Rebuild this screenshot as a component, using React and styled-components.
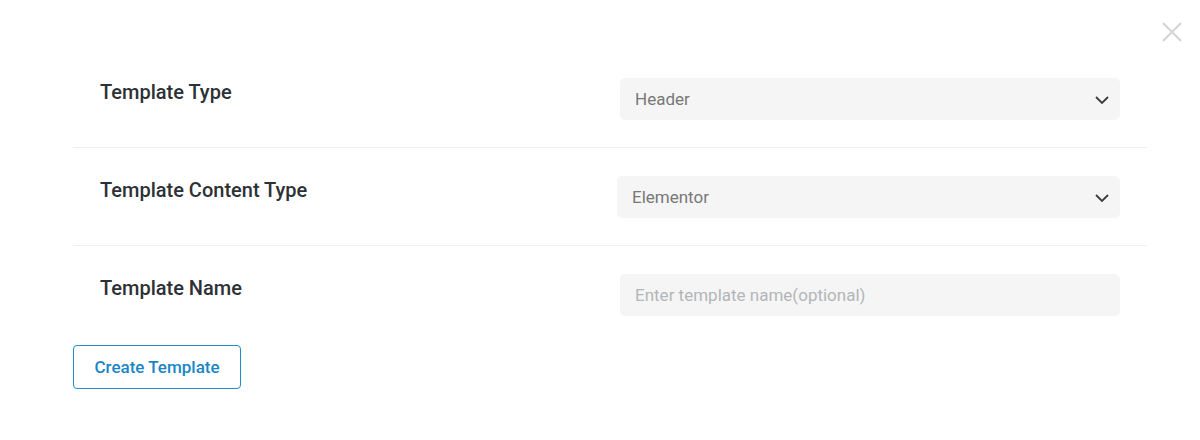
import React, { useState } from "react";
import styled, { createGlobalStyle } from "styled-components";

const GlobalStyle = createGlobalStyle`
  body {
    margin: 0;
    background: #ffffff;
    font-family: Roboto, "Liberation Sans", sans-serif;
  }
`;

const rows = [
  { label: "Template Type", kind: "select", value: "Header", options: ["Header", "Footer", "Single", "Archive"] },
  { label: "Template Content Type", kind: "select", value: "Elementor", options: ["Elementor", "Gutenberg"], wide: true },
  { label: "Template Name", kind: "input", placeholder: "Enter template name(optional)" },
];

const App = () => {
  const [values, setValues] = useState(rows.map((r) => r.value || ""));
  const update = (i, v) => setValues(values.map((old, j) => (j === i ? v : old)));

  return (
    <>
      <GlobalStyle />
      <Modal>
        <Close aria-label="Close">
          <svg width="20" height="20" viewBox="0 0 20 20">
            <path d="M1 1 L19 19 M19 1 L1 19" stroke="#d4d4d4" strokeWidth="2" fill="none" />
          </svg>
        </Close>
        <Form>
          {rows.map((row, i) => (
            <Row key={row.label}>
              <Label>{row.label}</Label>
              <Field wide={row.wide}>
                {row.kind === "select" ? (
                  <>
                    <Select value={values[i]} onChange={(e) => update(i, e.target.value)}>
                      {row.options.map((o) => (
                        <option key={o}>{o}</option>
                      ))}
                    </Select>
                    <Chevron width="14" height="8" viewBox="0 0 14 8">
                      <path d="M1 1 L7 7 L13 1" stroke="#3c3c3c" strokeWidth="1.8" fill="none" />
                    </Chevron>
                  </>
                ) : (
                  <Input placeholder={row.placeholder} value={values[i]} onChange={(e) => update(i, e.target.value)} />
                )}
              </Field>
            </Row>
          ))}
          <CreateButton>Create Template</CreateButton>
        </Form>
      </Modal>
    </>
  );
};

const Modal = styled.div`
  position: relative;
  width: 1200px;
  height: 440px;
  box-sizing: border-box;
  padding: 50px 53px 0 73px;
`;

const Close = styled.button`
  position: absolute;
  top: 22px;
  right: 18px;
  padding: 0;
  border: none;
  background: none;
  display: flex;
`;

const Form = styled.div`
  display: flex;
  flex-direction: column;
  align-items: flex-start;
`;

const Row = styled.div`
  display: flex;
  align-items: flex-start;
  justify-content: space-between;
  align-self: stretch;
  padding: 28px 27px 27px 27px;
  border-bottom: 1px solid #f0f0f0;

  &:nth-last-child(2) {
    border-bottom: none;
    padding-bottom: 29px;
  }
`;

const Label = styled.label`
  font-size: 20px;
  font-weight: 500;
  line-height: 28px;
  color: #2d3136;
`;

const Field = styled.div`
  position: relative;
  width: ${(p) => (p.wide ? "503px" : "500px")};
  height: 42px;
`;

const Select = styled.select`
  appearance: none;
  width: 100%;
  height: 100%;
  border: none;
  border-radius: 5px;
  background: #f5f5f5;
  padding: 0 40px 0 15px;
  font-family: Roboto, "Liberation Sans", sans-serif;
  font-size: 17px;
  color: #787878;
  outline: none;
`;

const Chevron = styled.svg`
  position: absolute;
  right: 11px;
  top: 18px;
  pointer-events: none;
`;

const Input = styled.input`
  box-sizing: border-box;
  width: 100%;
  height: 100%;
  border: none;
  border-radius: 5px;
  background: #f5f5f5;
  padding: 0 15px;
  font-family: Roboto, "Liberation Sans", sans-serif;
  font-size: 17px;
  color: #555;
  outline: none;

  &::placeholder {
    color: #b3b5b8;
  }
`;

const CreateButton = styled.button`
  width: 168px;
  height: 44px;
  border: 1px solid #1f8dcc;
  border-radius: 4px;
  background: #ffffff;
  color: #1a86c6;
  font-family: Roboto, "Liberation Sans", sans-serif;
  font-size: 17px;
  font-weight: 500;
  cursor: pointer;
`;

export default App;
